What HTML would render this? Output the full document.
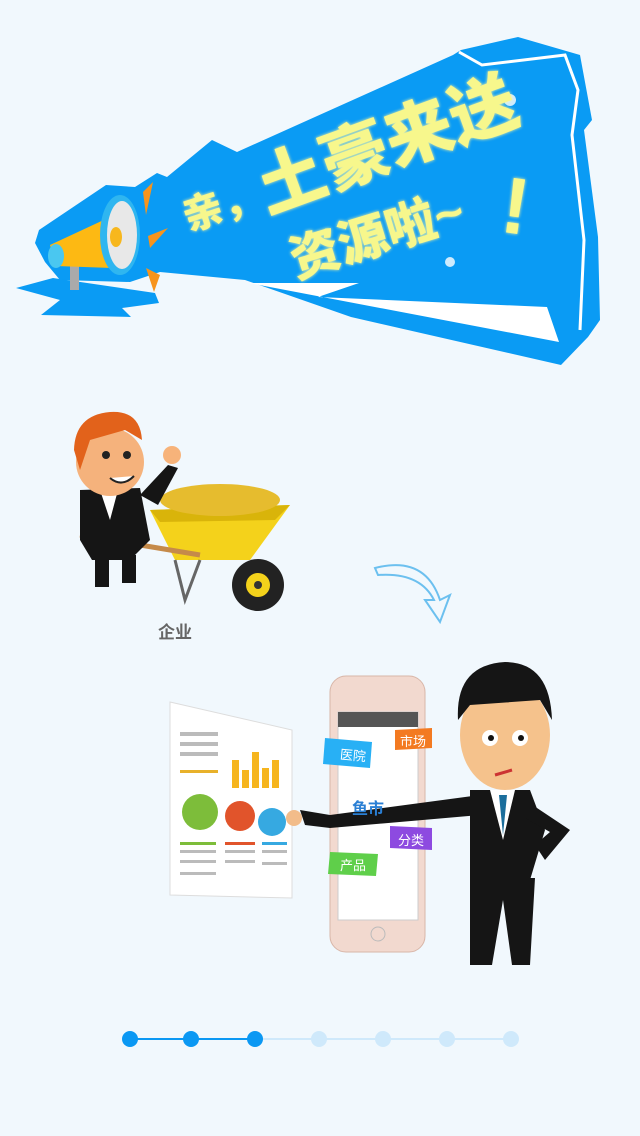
<!DOCTYPE html>
<html><head><meta charset="utf-8"><style>
html,body{margin:0;padding:0;}
body{width:640px;height:1136px;background:#f1f8fd;position:relative;overflow:hidden;font-family:"Liberation Sans","Noto Sans CJK SC",sans-serif;}
.t{position:absolute;color:#f7f78c;font-weight:900;white-space:nowrap;transform-origin:left top;text-shadow:0 0 3px #fdf9a0;}
</style></head><body>
<svg width="640" height="1136" style="position:absolute;left:0;top:0">
<!-- banner -->
<polygon fill="#0a9bf4" points="35,243 39,230 106,185 135,187 157,173 167,177 212,140 237,152 453,55 461,50 518,37 580,55 592,120 584,130 598,237 600,320 588,337 561,365 351,317 245,280 160,272 130,282 60,280 45,262" />
<polygon fill="#0a9bf4" points="16,288 53,278 155,293 159,303 122,308 131,317 41,315 60,300" />
<polygon fill="#fff" points="249,283 359,283 318,297 547,307 559,342" />
<polyline fill="none" stroke="#fff" stroke-width="3" points="459,52 482,65 565,55 578,90 572,135 584,240 580,330" />
<!-- megaphone -->
<polygon fill="#f7941d" points="143,192 153,182 146,215"/>
<polygon fill="#f7941d" points="148,236 168,228 150,248"/>
<polygon fill="#f7941d" points="146,268 160,275 154,292"/>
<rect x="70" y="265" width="9" height="25" fill="#aaa"/>
<path d="M50,245 L108,218 L112,268 L56,266 Z" fill="#fdb913"/>
<ellipse cx="56" cy="256" rx="8" ry="12" fill="#4ac7f0"/>
<ellipse cx="120" cy="235" rx="20" ry="40" fill="#2fb6f0"/>
<ellipse cx="122" cy="235" rx="15" ry="34" fill="#e8e8e8"/>
<ellipse cx="116" cy="237" rx="6" ry="10" fill="#f7b71d"/>
<!-- sparkles -->
<circle cx="510" cy="100" r="6" fill="#fff" opacity=".8"/>
<circle cx="450" cy="262" r="5" fill="#fff" opacity=".8"/>
<!-- first person + barrow -->
<path d="M150,510 L290,505 L250,560 L175,560 Z" fill="#f4d21b"/>
<path d="M150,510 L290,505 L275,520 L160,522 Z" fill="#d9b40a"/>
<ellipse cx="220" cy="500" rx="60" ry="16" fill="#e6bc2e"/>
<circle cx="258" cy="585" r="26" fill="#222"/><circle cx="258" cy="585" r="12" fill="#f4d21b"/><circle cx="258" cy="585" r="4" fill="#333"/>
<path d="M175,560 L185,600 L200,560" stroke="#666" stroke-width="3" fill="none"/>
<line x1="80" y1="535" x2="200" y2="555" stroke="#c58a4a" stroke-width="5"/>
<path d="M80,490 L140,488 L150,540 L130,560 L92,560 L80,540 Z" fill="#151515"/>
<path d="M100,490 L118,490 L110,520 Z" fill="#fff"/>
<rect x="95" y="555" width="14" height="32" fill="#151515"/><rect x="122" y="555" width="14" height="28" fill="#151515"/>
<path d="M140,495 L168,465 L178,468 L158,505 Z" fill="#151515"/>
<circle cx="172" cy="455" r="9" fill="#f7b37a"/>
<ellipse cx="110" cy="462" rx="34" ry="34" fill="#f5b27c"/>
<path d="M74,450 Q75,415 110,412 Q140,410 142,440 L125,430 L90,440 L80,470 Z" fill="#e2621b"/>
<circle cx="106" cy="455" r="4" fill="#222"/><circle cx="127" cy="455" r="4" fill="#222"/>
<path d="M110,478 Q122,488 134,476" fill="#fff" stroke="#222" stroke-width="2"/>
<!-- arrow -->
<path d="M375,568 Q425,555 440,600 L450,595 L440,622 L425,600 L434,600 Q420,572 378,575 Z" fill="none" stroke="#6cc0ef" stroke-width="2"/>
<!-- chart paper -->
<polygon points="170,702 292,730 292,898 170,895" fill="#fff" stroke="#ddd"/>
<g fill="#bbb"><rect x="180" y="732" width="38" height="4"/><rect x="180" y="742" width="38" height="4"/><rect x="180" y="752" width="38" height="4"/><rect x="180" y="770" width="38" height="3" fill="#e8b12a"/></g>
<g fill="#f6b51e"><rect x="232" y="760" width="7" height="28"/><rect x="242" y="770" width="7" height="18"/><rect x="252" y="752" width="7" height="36"/><rect x="262" y="768" width="7" height="20"/><rect x="272" y="760" width="7" height="28"/></g>
<circle cx="200" cy="812" r="18" fill="#7dbd3a"/><circle cx="240" cy="816" r="15" fill="#e1542b"/><circle cx="272" cy="822" r="14" fill="#36a9e1"/>
<g fill="#bbb"><rect x="180" y="850" width="36" height="3"/><rect x="180" y="860" width="36" height="3"/><rect x="180" y="872" width="36" height="3"/><rect x="225" y="850" width="30" height="3"/><rect x="225" y="860" width="30" height="3"/><rect x="262" y="850" width="25" height="3"/><rect x="262" y="862" width="25" height="3"/><rect x="180" y="842" width="36" height="3" fill="#7dbd3a"/><rect x="225" y="842" width="30" height="3" fill="#e1542b"/><rect x="262" y="842" width="25" height="3" fill="#36a9e1"/></g>
<!-- phone -->
<rect x="330" y="676" width="95" height="276" rx="16" fill="#f2d9cf" stroke="#d8b6a8"/>
<rect x="338" y="712" width="80" height="208" fill="#fff" stroke="#ccc"/>
<rect x="338" y="712" width="80" height="15" fill="#555"/>
<circle cx="378" cy="934" r="7" fill="none" stroke="#bbb"/>
<!-- tags -->
<polygon points="325,738 372,742 370,768 323,764" fill="#28b0f5"/>
<polygon points="395,730 432,728 432,748 395,750" fill="#f37a21"/>
<polygon points="390,826 432,828 432,850 390,848" fill="#8d4ae0"/>
<polygon points="330,852 378,854 376,876 328,874" fill="#5fcf4a"/>
<!-- second man -->
<path d="M300,810 L330,815 L480,795 L480,815 L330,828 L305,825 Z" fill="#151515"/>
<circle cx="294" cy="818" r="8" fill="#f2bc8a"/>
<path d="M470,790 L530,790 L545,830 L530,880 L470,880 Z" fill="#151515"/>
<path d="M490,790 L515,790 L503,840 Z" fill="#fff"/><path d="M499,795 L507,795 L503,835 Z" fill="#1b6e9c"/>
<path d="M525,800 L570,830 L545,860 L535,845 L550,832 L525,818 Z" fill="#151515"/>
<path d="M470,878 L535,878 L530,965 L512,965 L503,900 L492,965 L470,965 Z" fill="#151515"/>
<ellipse cx="505" cy="735" rx="45" ry="55" fill="#f5c28c"/>
<path d="M458,720 Q455,665 505,662 Q550,662 552,720 L540,700 L470,705 Z" fill="#151515"/>
<circle cx="490" cy="738" r="8" fill="#fff"/><circle cx="520" cy="738" r="8" fill="#fff"/>
<circle cx="491" cy="738" r="3" fill="#111"/><circle cx="521" cy="738" r="3" fill="#111"/>
<path d="M495,775 L512,770" stroke="#c33" stroke-width="3"/>
<!-- dots -->
<line x1="130" y1="1039" x2="255" y2="1039" stroke="#0b98f3" stroke-width="2"/>
<line x1="255" y1="1039" x2="511" y2="1039" stroke="#cfe9fb" stroke-width="2"/>
<g fill="#0b98f3"><circle cx="130" cy="1039" r="8"/><circle cx="191" cy="1039" r="8"/><circle cx="255" cy="1039" r="8"/></g>
<g fill="#cfe9fb"><circle cx="319" cy="1039" r="8"/><circle cx="383" cy="1039" r="8"/><circle cx="447" cy="1039" r="8"/><circle cx="511" cy="1039" r="8"/></g>
</svg>
<div class="t" style="left:178px;top:200px;font-size:40px;line-height:40px;transform:rotate(-18deg)">亲，</div>
<div class="t" style="left:248px;top:160px;font-size:68px;line-height:68px;transform:rotate(-20deg)">土豪来送</div>
<div class="t" style="left:284px;top:238px;font-size:50px;line-height:50px;transform:rotate(-17deg)">资源啦~</div>
<div class="t" style="left:508px;top:165px;font-size:80px;line-height:80px;transform:rotate(8deg)">!</div>
<div style="position:absolute;left:158px;top:618px;font-size:17px;font-weight:bold;color:#666">企业</div>
<div style="position:absolute;left:340px;top:745px;font-size:13px;color:#fff;transform:rotate(5deg)">医院</div>
<div style="position:absolute;left:400px;top:731px;font-size:13px;color:#fff">市场</div>
<div style="position:absolute;left:398px;top:830px;font-size:13px;color:#fff">分类</div>
<div style="position:absolute;left:340px;top:855px;font-size:13px;color:#fff">产品</div>
<div style="position:absolute;left:352px;top:795px;font-size:16px;font-weight:bold;color:#2a7fd4">鱼市</div>
</body></html>
